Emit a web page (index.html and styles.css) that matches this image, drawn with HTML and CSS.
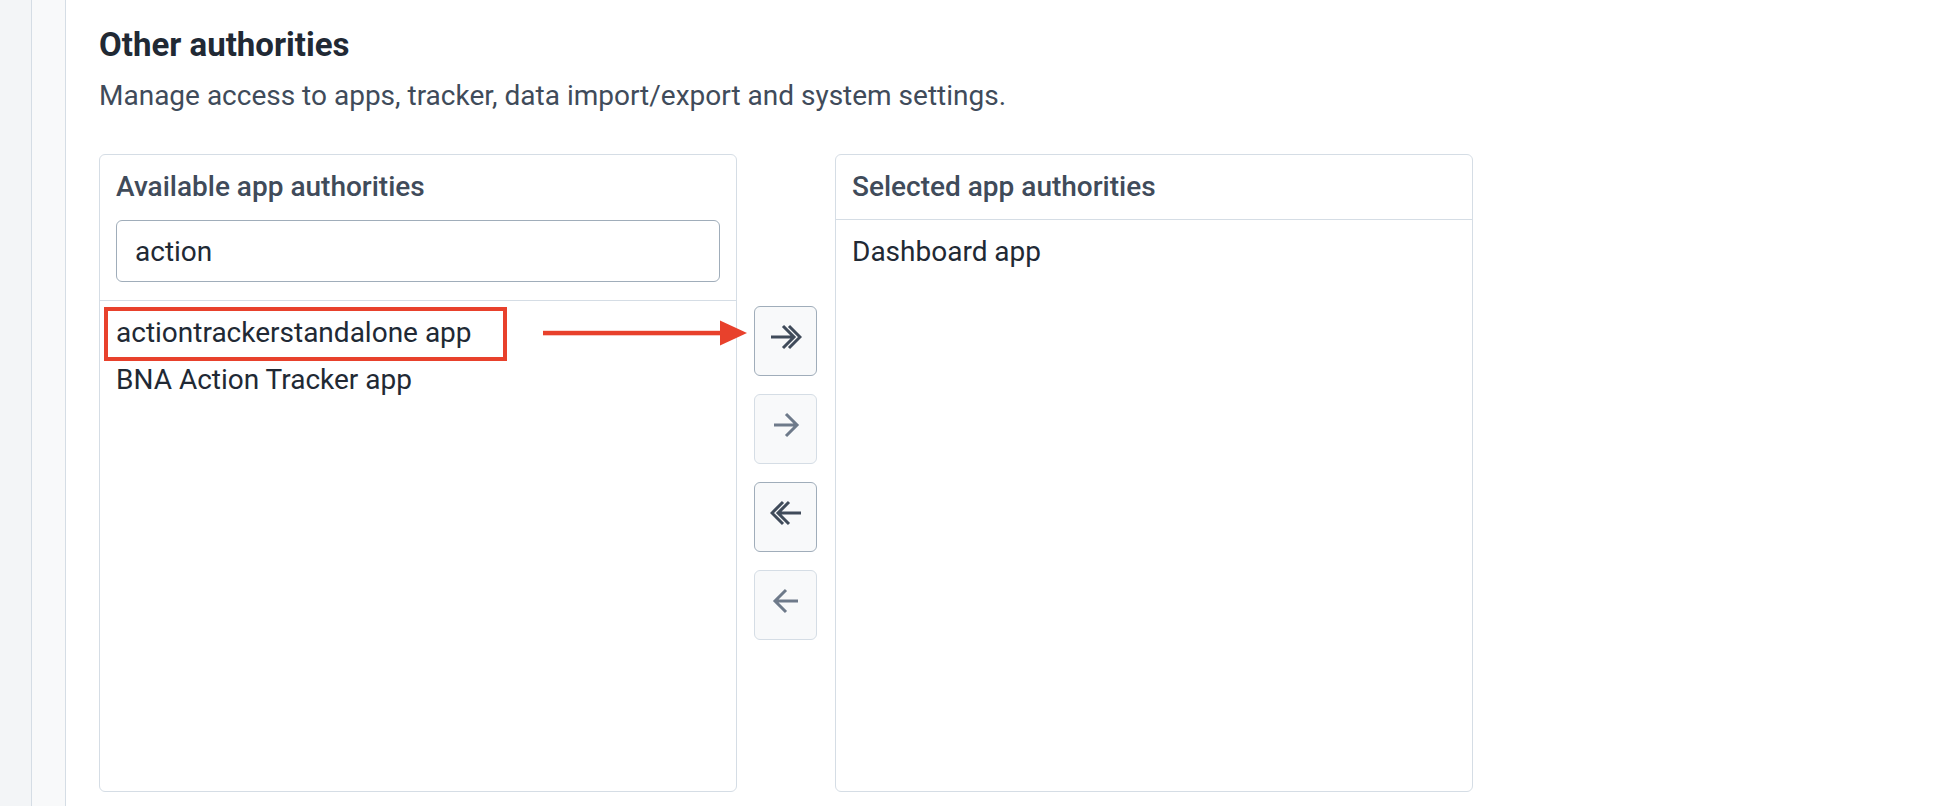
FILE: index.html
```html
<!DOCTYPE html>
<html lang="en">
<head>
<meta charset="utf-8">
<title>Other authorities</title>
<link rel="stylesheet" href="styles.css">
</head>
<body>
<div class="app">
  <div class="rail"></div>
  <div class="subrail"></div>
  <main class="main">
    <h2 class="title">Other authorities</h2>
    <p class="desc">Manage access to apps, tracker, data import/export and system settings.</p>
    <div class="transfer">
      <section class="panel">
        <header class="panel-head">
          <div class="panel-title">Available app authorities</div>
          <input class="filter" type="text" value="action">
        </header>
        <ul class="list">
          <li class="item">actiontrackerstandalone app<span class="mark"></span></li>
          <li class="item">BNA Action Tracker app</li>
        </ul>
      </section>

      <div class="actions">
        <button class="btn" type="button" aria-label="Move all to selected">
          <svg class="ico" viewBox="0 0 32 32" width="32" height="32"><path d="M1 16H24M13 5L24 16L13 27M19 5L30 16L19 27"/></svg>
        </button>
        <button class="btn disabled" type="button" aria-label="Move to selected">
          <svg class="ico" viewBox="0 0 32 32" width="32" height="32"><path d="M4 16H27M16 5L27 16L16 27"/></svg>
        </button>
        <button class="btn" type="button" aria-label="Move all to available">
          <svg class="ico" viewBox="0 0 32 32" width="32" height="32"><path d="M31 16H8M19 5L8 16L19 27M13 5L2 16L13 27"/></svg>
        </button>
        <button class="btn disabled" type="button" aria-label="Move to available">
          <svg class="ico" viewBox="0 0 32 32" width="32" height="32"><path d="M28 16H5M16 5L5 16L16 27"/></svg>
        </button>
      </div>

      <section class="panel">
        <header class="panel-head">
          <div class="panel-title">Selected app authorities</div>
        </header>
        <ul class="list">
          <li class="item">Dashboard app</li>
        </ul>
      </section>

      <svg class="annot-arrow" viewBox="0 0 204 26" width="204" height="26">
        <rect x="0" y="10.8" width="180" height="4.5" fill="#e8412c"/>
        <polygon points="177,0.5 204,13 177,25.5" fill="#e8412c"/>
      </svg>
    </div>
  </main>
</div>
</body>
</html>
```

FILE: styles.css
```css
* { box-sizing: border-box; }

html, body {
  margin: 0;
  padding: 0;
  background: #ffffff;
  font-family: Roboto, "Liberation Sans", Arial, sans-serif;
  color: #212934;
}

.app {
  display: flex;
  height: 806px;
  overflow: hidden;
}

.rail {
  width: 32px;
  flex-shrink: 0;
  background: #f3f5f7;
  border-right: 1px solid #d5dde5;
}

.subrail {
  width: 34px;
  flex-shrink: 0;
  background: #f8f9fa;
  border-right: 1px solid #d5dde5;
}

.main {
  flex: 1;
  padding: 26px 0 0 33px;
}

.title {
  margin: 0;
  font-size: 33px;
  font-weight: 700;
  line-height: 38px;
  color: #212934;
}

.desc {
  margin: 12px 0 0;
  font-size: 28px;
  line-height: 39px;
  color: #404b5a;
}

.transfer {
  position: relative;
  display: flex;
  align-items: flex-start;
  margin-top: 39px;
}

.panel {
  width: 638px;
  height: 638px;
  flex-shrink: 0;
  display: flex;
  flex-direction: column;
  border: 1px solid #d5dde5;
  border-radius: 6px;
  background: #fff;
}

.panel-head {
  padding: 12px 16px 12px;
  border-bottom: 1px solid #d5dde5;
}

.panel-title {
  font-size: 28px;
  font-weight: 500;
  line-height: 40px;
  color: #404b5a;
}

.filter {
  display: block;
  width: 100%;
  height: 62px;
  margin: 13px 0 6px;
  padding: 0 18px;
  border: 1px solid #a0adba;
  border-radius: 6px;
  background: #fff;
  font-family: Roboto, "Liberation Sans", Arial, sans-serif;
  font-size: 28px;
  color: #212934;
  outline: none;
}

.list {
  list-style: none;
  margin: 0;
  padding: 8px 0;
  flex: 1;
}

.item {
  position: relative;
  padding: 4px 16px;
  font-size: 28px;
  line-height: 39px;
  color: #212934;
}

.mark {
  position: absolute;
  left: 4px;
  top: -2px;
  width: 403px;
  height: 54px;
  border: 4px solid #e8412c;
}

.actions {
  display: flex;
  flex-direction: column;
  gap: 18px;
  margin: 152px 18px 0 17px;
}

.btn {
  width: 63px;
  height: 70px;
  display: flex;
  align-items: center;
  justify-content: center;
  padding: 0 0 8px;
  border: 1px solid #a0adba;
  border-radius: 6px;
  background: #f8f9fa;
  color: #404b5a;
  cursor: pointer;
}

.btn.disabled {
  border-color: #d5dde5;
  color: #6e7a8a;
}

.ico {
  display: block;
  fill: none;
  stroke: currentColor;
  stroke-width: 3;
}

.annot-arrow {
  position: absolute;
  left: 444px;
  top: 166px;
}
```
